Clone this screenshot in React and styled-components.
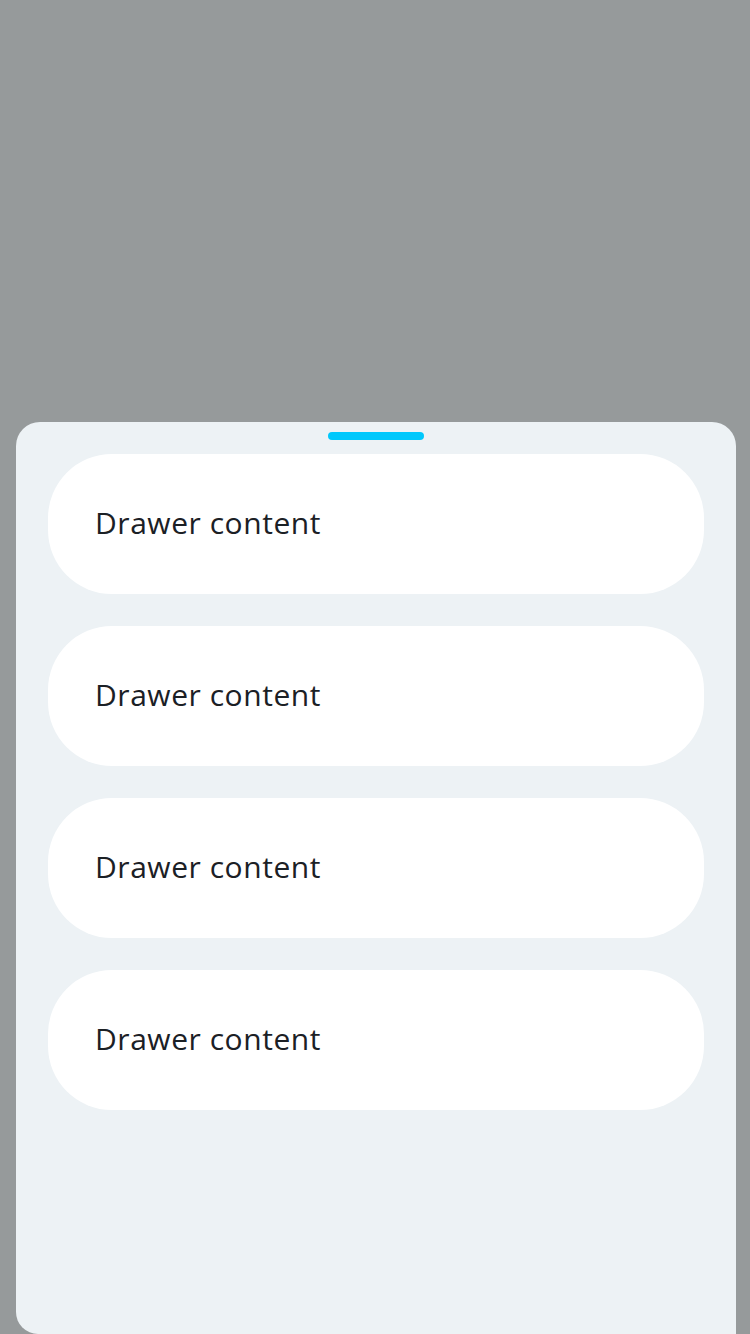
import styled, { createGlobalStyle } from 'styled-components'

const GlobalStyle = createGlobalStyle`
  html, body {
    margin: 0;
    padding: 0;
    background: #969a9b;
  }
  body {
    font-family: "Open Sans", "Noto Sans", sans-serif;
  }
`

const Screen = styled.div`
  width: 750px;
  height: 1334px;
  display: flex;
  flex-direction: column;
  justify-content: flex-end;
  background: #969a9b;
  overflow: hidden;
`

const Drawer = styled.div`
  margin: 0 14px 0 16px;
  height: 912px;
  box-sizing: border-box;
  padding: 10px 32px 0;
  background: #edf2f5;
  border-radius: 24px 24px 0 22px;
  display: flex;
  flex-direction: column;
  align-items: center;
`

const Handle = styled.div`
  width: 96px;
  height: 8px;
  border-radius: 4px;
  background: #00c8fc;
  margin-bottom: 14px;
`

const List = styled.div`
  align-self: stretch;
  display: flex;
  flex-direction: column;
  gap: 32px;
`

const Card = styled.div`
  height: 140px;
  border-radius: 64px;
  background: #ffffff;
  display: flex;
  align-items: center;
  padding-left: 47px;
`

const Label = styled.span`
  font-size: 30px;
  line-height: 40px;
  color: #1b2025;
  letter-spacing: 0.55px;
  margin-bottom: 3px;
`

const items = ['Drawer content', 'Drawer content', 'Drawer content', 'Drawer content']

export default function App() {
  return (
    <Screen>
      <GlobalStyle />
      <Drawer>
        <Handle />
        <List>
          {items.map((text, i) => (
            <Card key={i}>
              <Label>{text}</Label>
            </Card>
          ))}
        </List>
      </Drawer>
    </Screen>
  )
}
